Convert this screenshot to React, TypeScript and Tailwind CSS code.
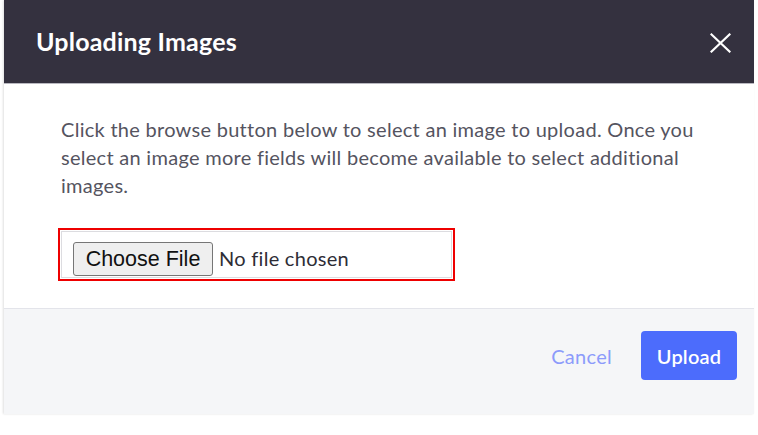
import React from "react";

export default function App() {
  return (
    <div className="w-[758px] h-[435px] bg-white overflow-hidden" style={{ fontFamily: "Lato, 'Open Sans', sans-serif" }}>
      <div className="ml-[4px] w-[750px] flex flex-col shadow-[-1px_0_2px_rgba(0,0,0,0.12)]">
        <div className="h-[84px] bg-[#34313f] flex items-center justify-between pl-[32px] pr-[23px] border-b border-[#b9b8c0]">
          <h1 className="text-white text-[25px] font-bold leading-none tracking-[0.2px] pb-[1px]">Uploading Images</h1>
          <svg width="21" height="20" viewBox="0 0 21 20" className="mt-[2px]">
            <path d="M1.5 1.5 L19.5 18.5 M19.5 1.5 L1.5 18.5" stroke="white" strokeWidth="2.2" strokeLinecap="square" />
          </svg>
        </div>
        <div className="bg-white pl-[57px] pr-[30px] pt-[31px] pb-[27px]">
          <p className="text-[20px] leading-[28px] tracking-[0.28px] text-[#55545f]">
            <span className="whitespace-nowrap">Click the browse button below to select an image to upload. Once you</span>
            <br />
            <span className="whitespace-nowrap">select an image more fields will become available to select additional</span>
            <br />
            images.
          </p>
          <div className="mt-[29px] ml-[-3px] w-[397px] h-[53px] border-2 border-[#ee0000] p-[1px]">
            <div className="w-full h-full border border-[#dcdce0] flex items-end pb-[1px] pl-[11px]">
              <div className="flex items-center">
                <div
                  className="h-[34px] w-[140px] border border-[#767676] rounded-[3px] bg-[#efefef] flex items-center justify-center text-[21.5px] text-[#111]"
                  style={{ fontFamily: "'Liberation Sans', Arial, sans-serif" }}
                >
                  Choose File
                </div>
                <span className="ml-[6px] mt-[-2px] text-[20px] tracking-[0.28px] text-[#2e2d36]">No file chosen</span>
              </div>
            </div>
          </div>
        </div>
        <div className="h-[106px] bg-[#f5f6f8] border-t border-[#e3e4ea] flex items-start justify-end pt-[22px] pr-[17px]">
          <span className="text-[20px] tracking-[0.28px] text-[#8c9bfb] mr-[29px] mt-[10px]">Cancel</span>
          <div className="w-[96px] h-[49px] rounded-[4px] bg-[#4c6cfc] text-white text-[20px] tracking-[0.2px] font-semibold flex items-center justify-center">
            Upload
          </div>
        </div>
      </div>
    </div>
  );
}
